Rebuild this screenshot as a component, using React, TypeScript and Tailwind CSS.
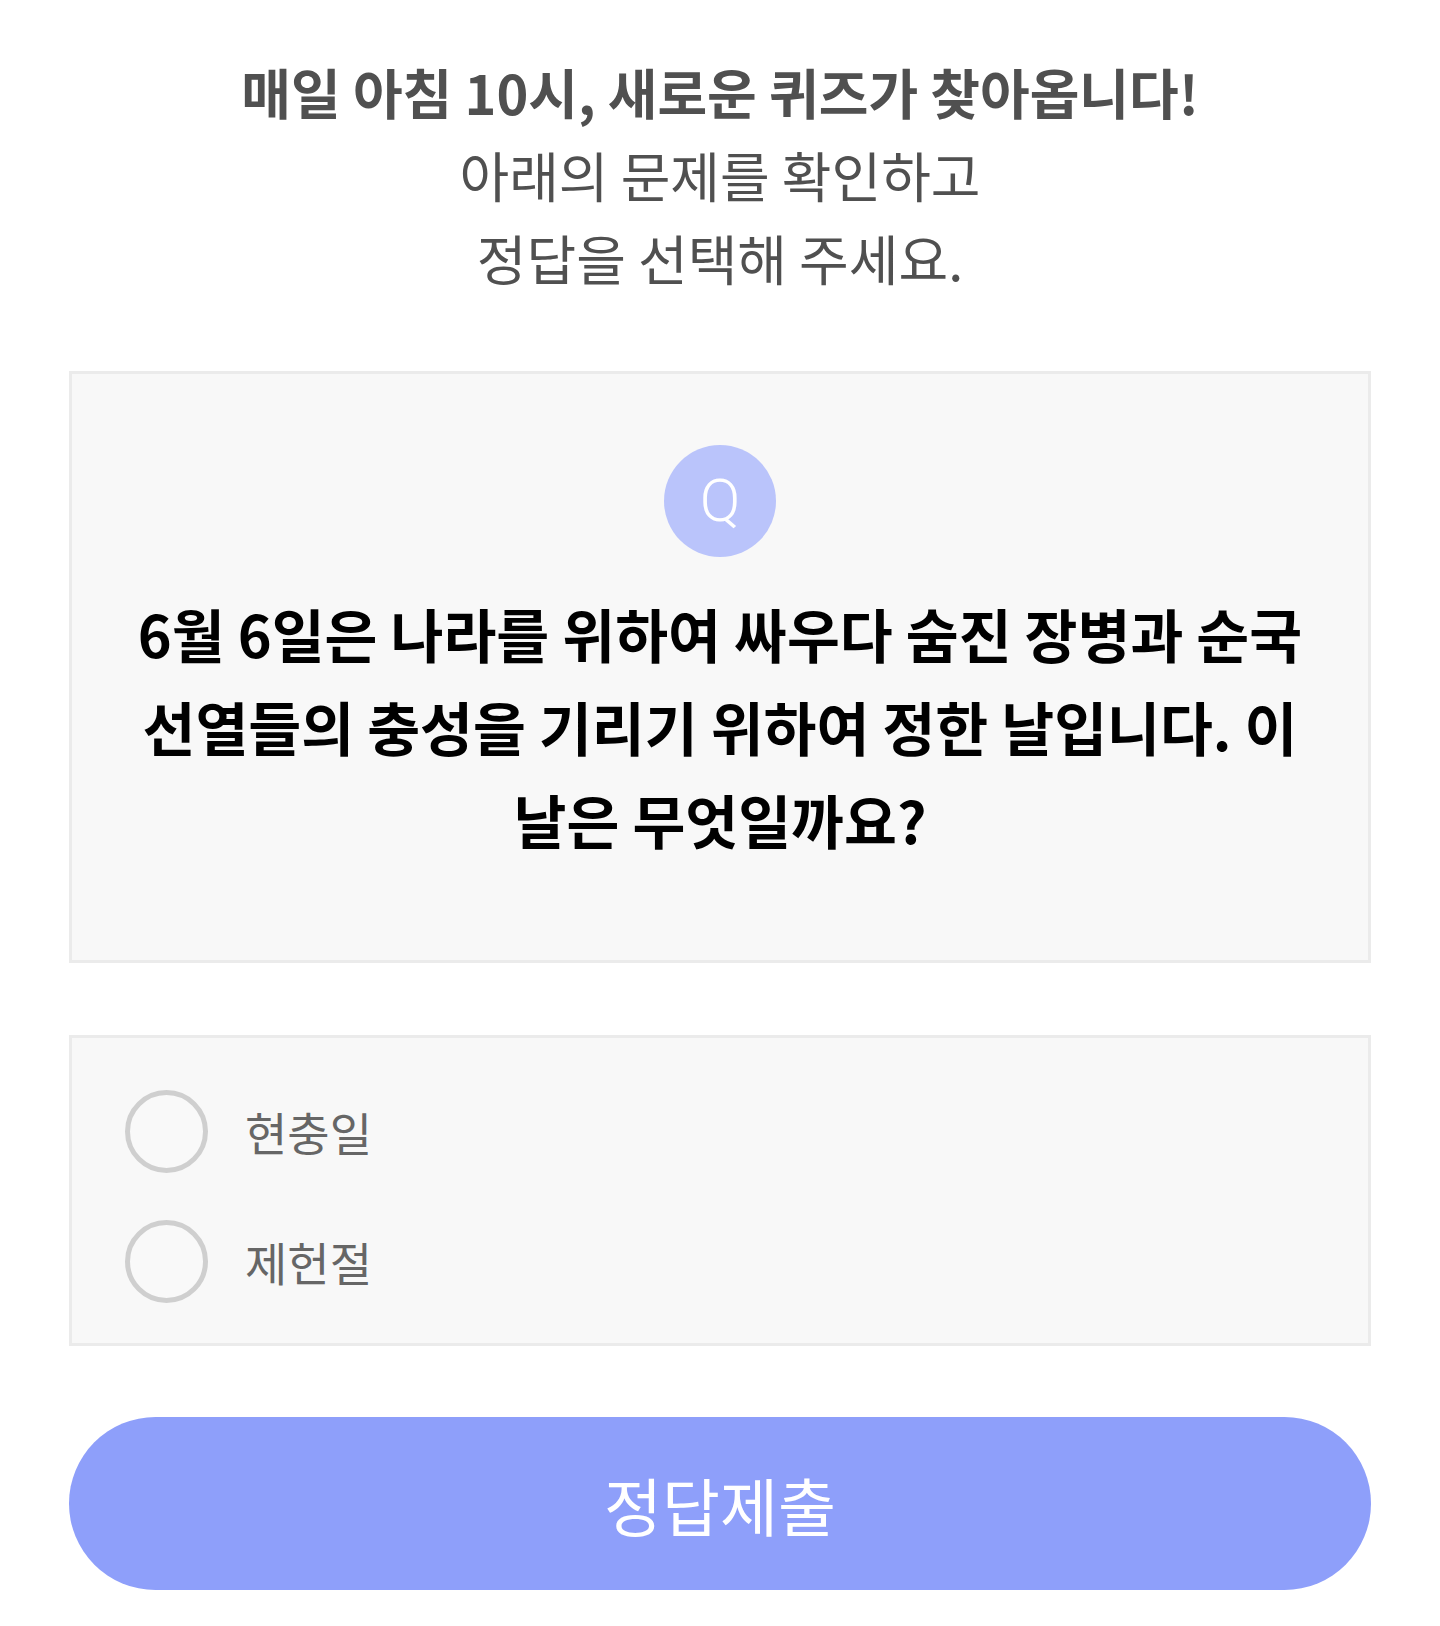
import React from "react";

const font = { fontFamily: '"Noto Sans CJK KR", "Noto Sans", sans-serif' };

function Radio({ label }: { label: string }) {
  return (
    <label className="flex h-[130px] items-center gap-[37px] cursor-pointer">
      <span className="block h-[83px] w-[83px] shrink-0 rounded-full border-[5px] border-[#cfcfcf] bg-[#f9f9f9]" />
      <span className="text-[46px] leading-none text-[#666666]">{label}</span>
    </label>
  );
}

export default function App() {
  return (
    <div className="min-h-[1626px] w-full bg-white" style={font}>
      <div className="mx-auto flex w-[1302px] flex-col pt-[50px] pb-[37px]">
        <div className="text-center text-[54px] leading-[83px] text-[#505050]">
          <p className="font-bold">매일 아침 10시, 새로운 퀴즈가 찾아옵니다!</p>
          <p>아래의 문제를 확인하고</p>
          <p>정답을 선택해 주세요.</p>
        </div>

        <div className="mt-[72px] flex flex-col items-center border-[3px] border-[#ebebeb] bg-[#f8f8f8] px-[50px] pt-[71px] pb-[94px]">
          <div className="flex h-[112px] w-[112px] items-center justify-center rounded-full bg-[#bac4fb] text-[60px] font-light leading-none text-white" style={{ fontFamily: 'Roboto, "Noto Sans", sans-serif' }}>
            Q
          </div>
          <p className="mt-[30px] break-keep text-center text-[57.5px] font-bold leading-[93px] text-black">
            6월 6일은 나라를 위하여 싸우다 숨진 장병과 순국 선열들의 충성을 기리기 위하여 정한 날입니다. 이 날은 무엇일까요?
          </p>
        </div>

        <div className="mt-[72px] flex flex-col border-[3px] border-[#ebebeb] bg-[#f8f8f8] pl-[53px] pt-[28px] pb-[17px]">
          <Radio label="현충일" />
          <Radio label="제헌절" />
        </div>

        <button className="mt-[71px] flex h-[173px] w-full items-center justify-center rounded-full bg-[#8e9ffa] text-[63px] leading-none text-white">
          정답제출
        </button>
      </div>
    </div>
  );
}
